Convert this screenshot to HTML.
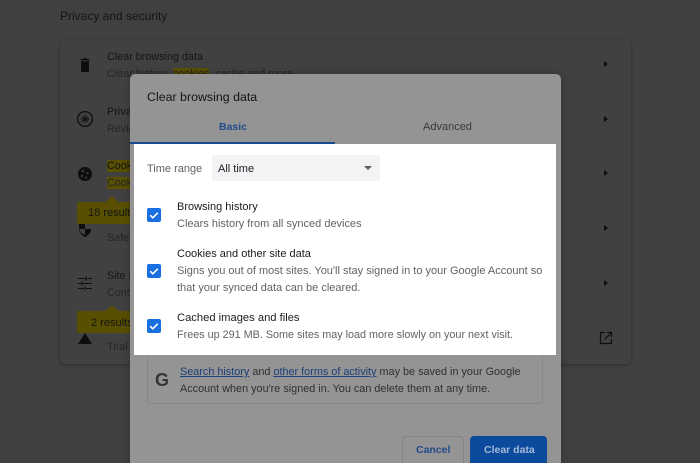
<!DOCTYPE html>
<html><head><meta charset="utf-8"><style>
html,body{margin:0;padding:0;overflow:hidden;width:700px;height:463px}
body{position:relative;background:#404040;font-family:"Liberation Sans",sans-serif}
#w{position:absolute;left:0;top:0;width:700px;height:463px;overflow:hidden;filter:blur(.35px);background:#404040}
.a{position:absolute;white-space:nowrap;line-height:14px}
.b{position:absolute}
.d{color:#141414;font-size:10.8px}
.g{color:#252525;font-size:10.8px}
.t{color:#1c1c1c;font-size:11px}
.s{color:#5f6368;font-size:11px}
.y{background:#585000}
.tri{position:absolute;width:0;height:0;border-left:4px solid #0e0e0e;border-top:3.5px solid transparent;border-bottom:3.5px solid transparent;left:604px}
svg{position:absolute}
</style></head><body><div id="w">
<div class="a" style="left:60px;top:9px;font-size:12px;color:#141414">Privacy and security</div>
<div class="b" style="left:60px;top:40px;width:571px;height:324px;background:#414141;border-radius:5px;box-shadow:0 1px 3px rgba(0,0,0,.3)"></div>

<svg style="left:78px;top:57px" width="14" height="16" viewBox="0 0 14 16"><path d="M2.500 2h9v1.400h-9zM5.500 1h3v1h-3zM3 4.200h8V14a1 1 0 0 1-1 1H4a1 1 0 0 1-1-1z" fill="#0e0e0e"/></svg>
<div class="a d" style="left:107px;top:50px">Clear browsing data</div>
<div class="a g" style="left:107px;top:67px">Clear history, <span class="y">cookies</span>, cache and more</div>

<svg style="left:76px;top:110px" width="18" height="18" viewBox="0 0 18 18"><circle cx="9" cy="9" r="7.400" fill="none" stroke="#0e0e0e" stroke-width="1.300"/><path d="M9 4.500v9M4.500 9h9M5.800 5.800l6.400 6.400M12.200 5.800l-6.400 6.400" stroke="#0e0e0e" stroke-width=".9"/></svg>
<div class="a d" style="left:107px;top:105px">Privacy</div>
<div class="a g" style="left:107px;top:122px">Review</div>

<svg style="left:77px;top:166px" width="16" height="16" viewBox="0 0 16 16"><circle cx="8" cy="8" r="7" fill="#0e0e0e"/><circle cx="6" cy="5" r="1.200" fill="#414141"/><circle cx="10.500" cy="7" r="1.100" fill="#414141"/><circle cx="5" cy="10" r="1.100" fill="#414141"/><circle cx="9" cy="11.500" r="1" fill="#414141"/></svg>
<div class="a d" style="left:107px;top:159px"><span class="y">Cookies</span></div>
<div class="a g" style="left:107px;top:176px"><span class="y">Cookies</span></div>
<div class="b" style="left:77px;top:202px;width:70px;height:22px;background:#585000;border-radius:2px"></div>
<div class="b" style="left:106px;top:196px;width:0;height:0;border-left:6px solid transparent;border-right:6px solid transparent;border-bottom:6px solid #585000"></div>
<div class="a" style="left:88px;top:206px;font-size:11px;color:#141414">18 results</div>
<svg style="left:79px;top:224px" width="12" height="13" viewBox="0 0 12 13"><path d="M0 0h12v5c0 4-3 6.500-6 8-3-1.500-6-4-6-8z" fill="#0e0e0e"/><path d="M6 0h6v5H6zM0 5h6v6L2 9z" fill="#414141"/></svg>
<div class="a g" style="left:107px;top:231px">Safe</div>

<svg style="left:78px;top:276px" width="14" height="15" viewBox="0 0 14 15"><path d="M0 2.500h8M10 2.500h4M0 7.500h3M5 7.500h9M0 12.500h6M8 12.500h6M8.500 .5v4M4 5.500v4M7 10.500v4" stroke="#0e0e0e" stroke-width="1.100" fill="none"/></svg>
<div class="a d" style="left:107px;top:269px">Site settings</div>
<div class="a g" style="left:107px;top:286px">Controls</div>
<div class="b" style="left:77px;top:311px;width:70px;height:22px;background:#585000;border-radius:2px"></div>
<div class="b" style="left:106px;top:305px;width:0;height:0;border-left:6px solid transparent;border-right:6px solid transparent;border-bottom:6px solid #585000"></div>
<div class="a" style="left:91px;top:316px;font-size:11px;color:#141414">2 results</div>
<svg style="left:78px;top:333px" width="14" height="11" viewBox="0 0 14 11"><path d="M7 0l7 11H0z" fill="#0e0e0e"/></svg>
<div class="a g" style="left:107px;top:340px">Trial</div>

<div class="tri" style="top:61px"></div>
<div class="tri" style="top:116px"></div>
<div class="tri" style="top:170px"></div>
<div class="tri" style="top:225px"></div>
<div class="tri" style="top:280px"></div>
<svg style="left:599px;top:331px" width="14" height="14" viewBox="0 0 14 14"><path d="M6 1.500H1.500v11h11V8M8 1.500h4.500V6M12.500 1.500L5.500 8.500" fill="none" stroke="#0e0e0e" stroke-width="1.200"/></svg>

<div class="b" style="left:130px;top:74px;width:431px;height:395px;background:#949494;border-radius:5px 5px 0 0;box-shadow:0 0 8px rgba(0,0,0,.25)"></div>
<div class="a" style="left:147px;top:90px;font-size:12.400px;color:#141414">Clear browsing data</div>
<div class="a" style="left:219px;top:120px;font-size:10.500px;font-weight:bold;color:#224a8a">Basic</div>
<div class="a" style="left:423px;top:120px;font-size:11px;color:#3a3a3a">Advanced</div>
<div class="b" style="left:130px;top:142px;width:205px;height:2px;background:#1a4a90"></div>

<div class="b" style="left:134px;top:144px;width:422px;height:211px;background:#fff"></div>
<div class="a s" style="left:147px;top:162px">Time range</div>
<div class="b" style="left:212px;top:155px;width:168px;height:26px;background:#f1f3f4;border-radius:2px"></div>
<div class="a" style="left:218px;top:162px;font-size:11px;color:#202124">All time</div>
<div class="b" style="left:364px;top:166px;width:0;height:0;border-left:4.500px solid transparent;border-right:4.500px solid transparent;border-top:4.500px solid #5a5a5a"></div>

<svg style="left:147px;top:208px" width="14" height="14" viewBox="0 0 14 14"><rect width="14" height="14" rx="2" fill="#1a6fe0"/><path d="M3.200 7.200l2.600 2.600 5-5" fill="none" stroke="#fff" stroke-width="1.600"/></svg>
<div class="a t" style="left:177px;top:200px">Browsing history</div>
<div class="a s" style="left:177px;top:217px">Clears history from all synced devices</div>

<svg style="left:147px;top:264px" width="14" height="14" viewBox="0 0 14 14"><rect width="14" height="14" rx="2" fill="#1a6fe0"/><path d="M3.200 7.200l2.600 2.600 5-5" fill="none" stroke="#fff" stroke-width="1.600"/></svg>
<div class="a t" style="left:177px;top:247px">Cookies and other site data</div>
<div class="a s" style="left:177px;top:264px">Signs you out of most sites. You'll stay signed in to your Google Account so</div>
<div class="a s" style="left:177px;top:281px">that your synced data can be cleared.</div>

<svg style="left:147px;top:319px" width="14" height="14" viewBox="0 0 14 14"><rect width="14" height="14" rx="2" fill="#1a6fe0"/><path d="M3.200 7.200l2.600 2.600 5-5" fill="none" stroke="#fff" stroke-width="1.600"/></svg>
<div class="a t" style="left:177px;top:311px;font-size:11.200px">Cached images and files</div>
<div class="a s" style="left:177px;top:328px;font-size:10.800px">Frees up 291 MB. Some sites may load more slowly on your next visit.</div>

<div class="b" style="left:147px;top:355px;width:394px;height:48px;border:1px solid #888;border-top:0;border-radius:0 0 3px 3px"></div>
<div class="a" style="left:155px;top:371px;font-size:18px;line-height:18px;font-weight:bold;color:#363636">G</div>
<div class="a" style="left:180px;top:365px;font-size:10.850px;color:#303030"><span style="color:#1b407a;text-decoration:underline">Search history</span> and <span style="color:#1b407a;text-decoration:underline">other forms of activity</span> may be saved in your Google</div>
<div class="a" style="left:180px;top:382px;font-size:10.850px;color:#303030">Account when you're signed in. You can delete them at any time.</div>

<div class="b" style="left:402px;top:436px;width:60px;height:32px;border:1px solid #848484;border-radius:4px"></div>
<div class="a" style="left:416px;top:443px;font-size:10.500px;font-weight:bold;color:#224a8a">Cancel</div>
<div class="b" style="left:470px;top:436px;width:77px;height:32px;background:#0c4a9e;border-radius:4px"></div>
<div class="a" style="left:484px;top:443px;font-size:10.500px;font-weight:bold;color:#a4bad8">Clear data</div>
</div></body></html>
